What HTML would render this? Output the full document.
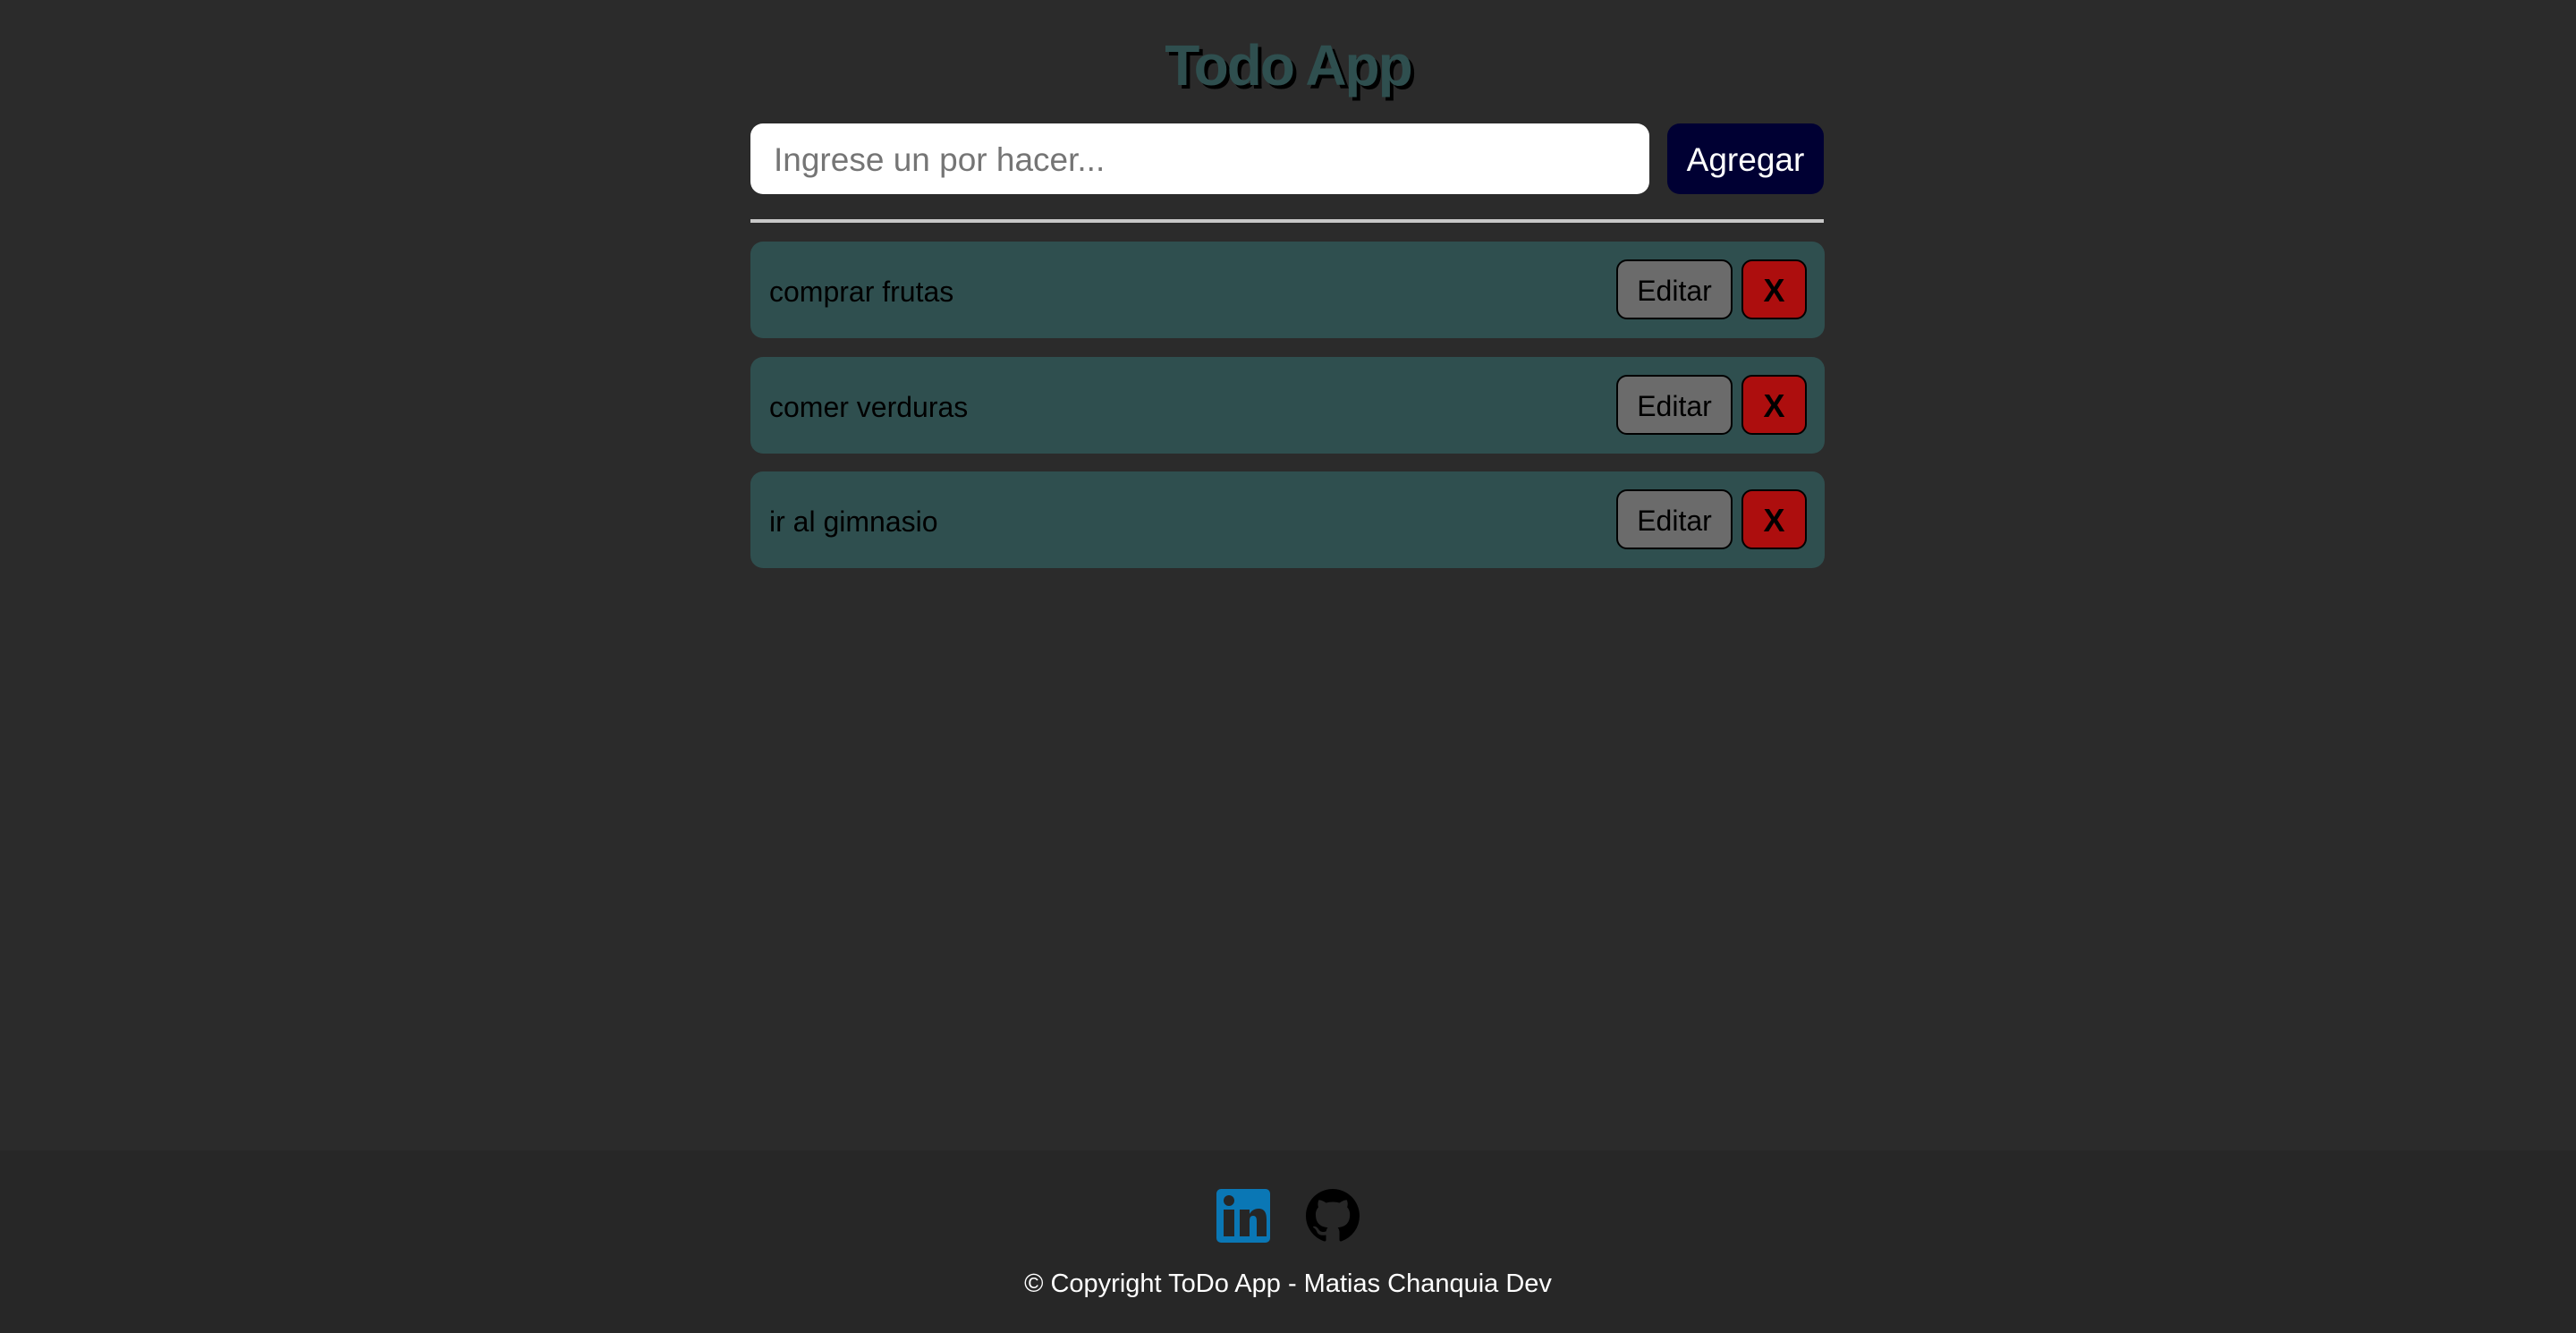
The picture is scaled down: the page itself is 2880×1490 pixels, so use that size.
<!DOCTYPE html>
<html><head><meta charset="utf-8"><style>
html,body{margin:0;padding:0}
body{width:2880px;height:1490px;background:#2b2b2b;font-family:"Gill Sans","Liberation Sans",sans-serif;position:relative;overflow:hidden}
.title{position:absolute;left:0;width:2880px;top:30px;text-align:center;font-size:64px;font-weight:bold;color:#2f4f4f;text-shadow:4px 4px 0 #000;letter-spacing:-2px;line-height:86px}
.input{position:absolute;left:839px;top:138px;width:1005px;height:79px;background:#fff;border-radius:14px;box-sizing:border-box;padding-left:26px;font-size:37px;color:#757575;line-height:82px}
.add{position:absolute;left:1864px;top:138px;width:175px;height:79px;background:#000033;border-radius:14px;color:#fff;font-size:37px;text-align:center;line-height:82px}
.line{position:absolute;left:839px;top:245px;width:1200px;height:4px;background:#c8c8c8}
.item{position:absolute;left:839px;width:1201px;height:108px;background:#2f4f4f;border-radius:14px}
.item .t{position:absolute;left:21px;top:2px;line-height:108px;font-size:32px;color:#000}
.edit{position:absolute;left:968px;top:20px;width:130px;height:67px;box-sizing:border-box;border:2px solid #000;border-radius:12px;background:#6b6b6b;font-size:32px;line-height:66px;text-align:center;color:#000}
.x{position:absolute;left:1108px;top:20px;width:73px;height:67px;box-sizing:border-box;border:2px solid #000;border-radius:12px;background:#ad0e0e;font-size:36px;font-weight:bold;line-height:65px;text-align:center;color:#000}
.footer{position:absolute;left:0;top:1286px;width:2880px;height:204px;background:#272727}
.copy{position:absolute;left:0;width:2880px;top:1413px;text-align:center;color:#fff;font-size:29px;line-height:44px}
</style></head><body>
<div class="title">Todo App</div>
<div class="input">Ingrese un por hacer...</div>
<div class="add">Agregar</div>
<div class="line"></div>
<div class="item" style="top:270px"><span class="t">comprar frutas</span><div class="edit">Editar</div><div class="x">X</div></div>
<div class="item" style="top:399px"><span class="t">comer verduras</span><div class="edit">Editar</div><div class="x">X</div></div>
<div class="item" style="top:527px"><span class="t">ir al gimnasio</span><div class="edit">Editar</div><div class="x">X</div></div>
<div class="footer"></div>
<svg style="position:absolute;left:1360px;top:1329px" width="60" height="60" viewBox="0 0 60 60">
<rect width="60" height="60" rx="5" fill="#0a77b5"/>
<circle cx="14" cy="13" r="6" fill="#262626"/>
<rect x="8" y="23" width="12" height="30" fill="#262626"/>
<path d="M26 23h11v5c2-4 6-6 10-6 7 0 9 5 9 12v19H45V36c0-4-1-6-4-6s-4 2-4 6v17H26z" fill="#262626"/>
</svg>
<svg style="position:absolute;left:1460px;top:1329px" width="60" height="60" viewBox="0 0 16 16">
<path fill="#000" d="M8 0C3.58 0 0 3.580 0 8c0 3.54 2.29 6.530 5.47 7.590.4.07.55-.17.55-.38 0-.19-.01-.82-.01-1.49-2.01.37-2.530-.49-2.690-.94-.09-.23-.48-.94-.82-1.13-.28-.15-.68-.52-.01-.53.63-.01 1.080.58 1.230.82.72 1.210 1.870.87 2.330.66.07-.52.28-.87.51-1.07-1.780-.2-3.640-.89-3.640-3.950 0-.87.31-1.590.82-2.150-.08-.2-.36-1.020.08-2.120 0 0 .67-.21 2.200.82.64-.18 1.320-.27 2-.27.68 0 1.360.09 2 .27 1.530-1.040 2.200-.82 2.200-.82.44 1.100.16 1.920.08 2.120.51.56.82 1.270.82 2.150 0 3.070-1.870 3.750-3.650 3.950.29.25.54.73.54 1.480 0 1.070-.01 1.930-.01 2.200 0 .21.15.46.55.38A8.013 8.013 0 0016 8c0-4.420-3.580-8-8-8z"/>
</svg>
<div class="copy">© Copyright ToDo App - Matias Chanquia Dev</div>
</body></html>
